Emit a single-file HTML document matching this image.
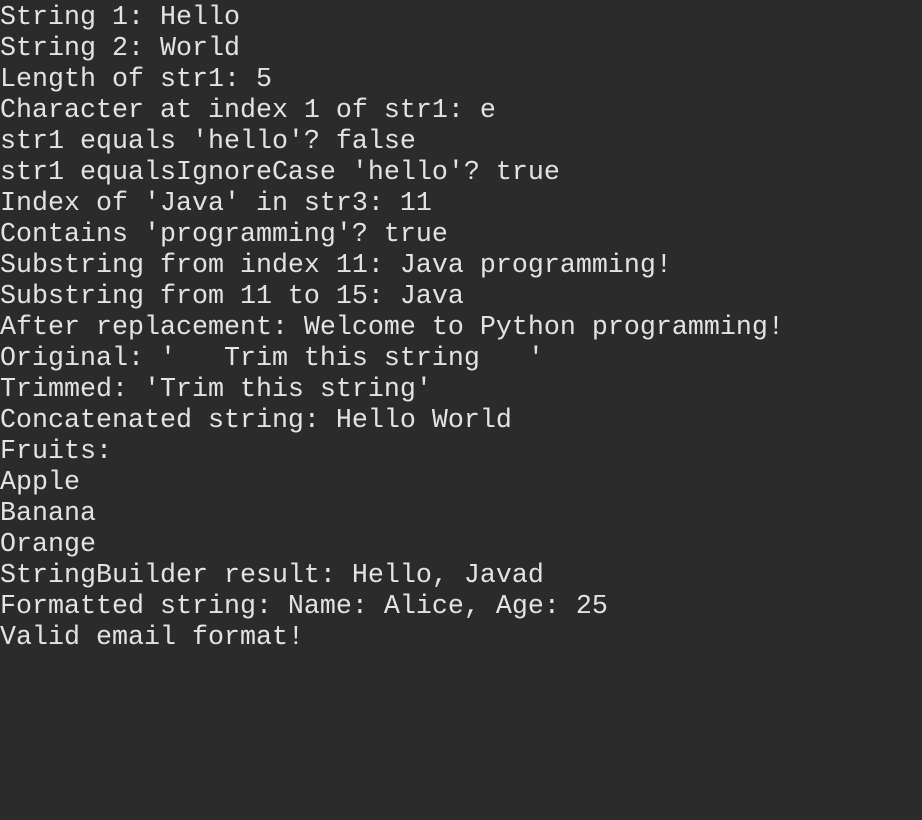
<!DOCTYPE html>
<html><head><meta charset="utf-8"><style>
html,body{margin:0;padding:0;background:#2b2b2b;width:922px;height:820px;overflow:hidden}
pre{margin:0;padding:3px 0 0 0;font-family:"Liberation Mono","Courier New",monospace;font-size:26.67px;line-height:31px;color:#e3e3e3;white-space:pre}
</style></head><body><pre>String 1: Hello
String 2: World
Length of str1: 5
Character at index 1 of str1: e
str1 equals 'hello'? false
str1 equalsIgnoreCase 'hello'? true
Index of 'Java' in str3: 11
Contains 'programming'? true
Substring from index 11: Java programming!
Substring from 11 to 15: Java
After replacement: Welcome to Python programming!
Original: '   Trim this string   '
Trimmed: 'Trim this string'
Concatenated string: Hello World
Fruits:
Apple
Banana
Orange
StringBuilder result: Hello, Javad
Formatted string: Name: Alice, Age: 25
Valid email format!</pre></body></html>
